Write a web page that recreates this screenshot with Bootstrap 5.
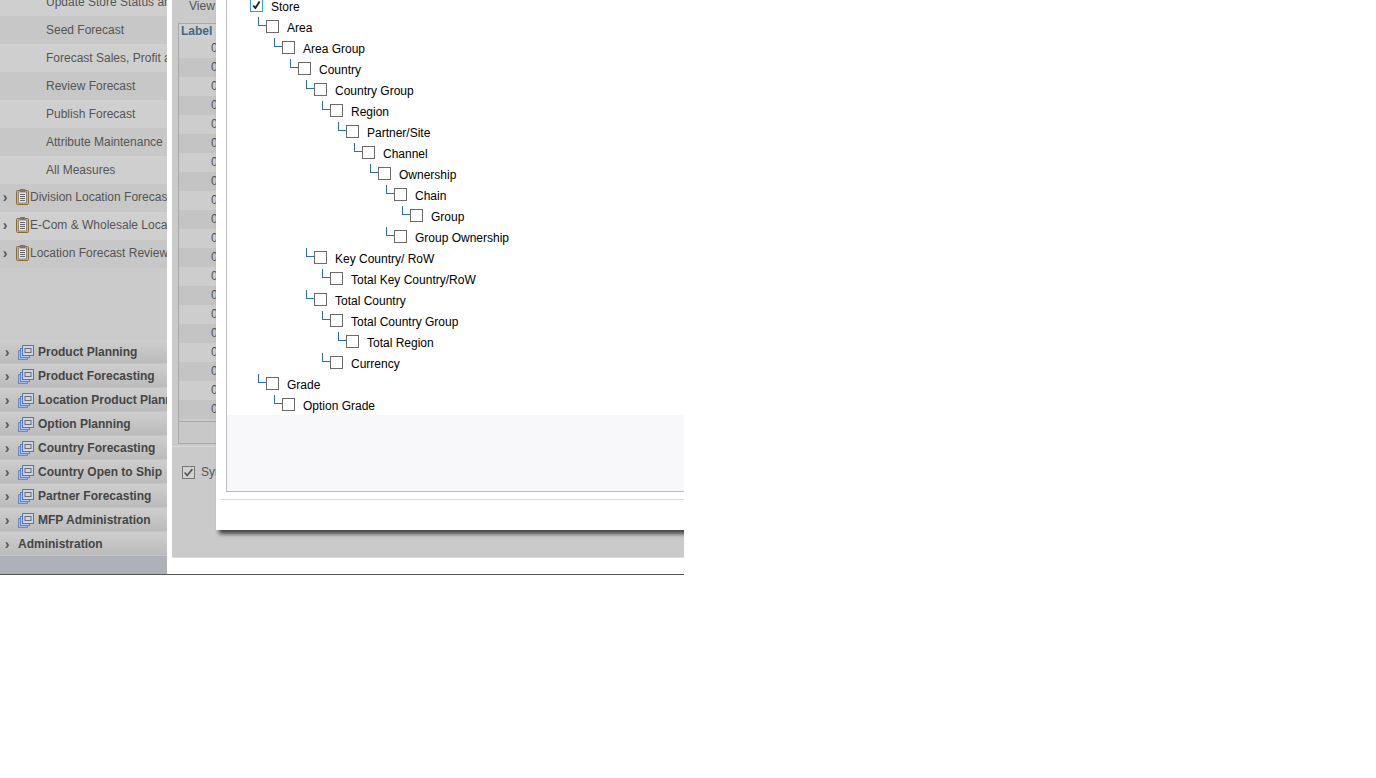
<!DOCTYPE html>
<html lang="en">
<head>
<meta charset="UTF-8">
<title>Store hierarchy</title>
<link href="https://cdn.jsdelivr.net/npm/bootstrap@5.3.3/dist/css/bootstrap.min.css" rel="stylesheet">
<style>
    body { margin: 0; background: #fff; font-family: "Liberation Sans", Arial, sans-serif; font-size: 12px; color: #000; }
    .stage { width: 684px; height: 575px; overflow: hidden; position: relative; border-bottom: 1px solid #555; }
    .side { width: 167px; height: 575px; background: #aeb1ba; overflow: hidden; position: relative; z-index: 1; }
    .side-top { height: 352px; margin-top: -12px; background: #cbcbcb; color: #555; }
    .tree-row { height: 28px; line-height: 28px; white-space: nowrap; overflow: hidden; }
    .tree-row:nth-child(odd) { background: #cfcfcf; }
    .tree-row:nth-child(even) { background: #c7c7c7; }
    .child-row { padding-left: 46px; }
    .folder-row { display: flex; align-items: center; line-height: 26px; padding-bottom: 2px; }
    .arrow { width: 14px; text-align: center; color: #555; flex: none; font-weight: bold; font-size: 14px; line-height: 1; }
    .folder-row .arrow { width: 10px; margin-right: 6px; }
    .clip-icon { flex: none; margin-right: 1px; }
    .acc-row { height: 24px; display: flex; align-items: center; font-weight: bold; color: #454545; white-space: nowrap; overflow: hidden; background: linear-gradient(#cecece, #bbbbbb); border-bottom: 1px solid #c6c6b8; }
    .acc-icon { flex: none; margin: 0 4px; }
    .main { position: absolute; left: 172px; top: 0; right: 0; height: 558px; background: #cacaca; border-bottom: 1px solid #dcdcdc; color: #555; }
    .view-row { height: 23px; padding-left: 17px; line-height: 13px; }
    .grid-box { margin-left: 6px; width: 500px; height: 421px; border: 1px solid #a8a8a8; }
    .grid-head { height: 15px; line-height: 15px; padding-left: 2px; font-weight: bold; color: #3f6a85; background: #cfcfcf; }
    .grid-cell { height: 19px; line-height: 19px; padding-left: 32px; background: #cdcdcd; }
    .grid-cell:nth-child(even) { background: #c4c4c4; }
    .grid-foot { height: 21px; margin-top: 2px; border-top: 1px solid #a8a8a8; background: #c8c8c8; }
    .main-rule { margin-top: 2px; border-top: 1px solid #d8d8d8; }
    .sync-row { padding: 18px 0 0 10px; line-height: 14px; gap: 6px; }
    .sync-box { appearance: none; width: 13px; height: 13px; margin: 0; border: 1px solid #777; background: #d2d2d2 url("data:image/svg+xml,%3Csvg xmlns='http://www.w3.org/2000/svg' viewBox='0 0 13 13'%3E%3Cpath d='M2 6.5 5 10 11 2.5' fill='none' stroke='%23555' stroke-width='2'/%3E%3C/svg%3E") center no-repeat; }
    .dialog { position: absolute; left: 216px; top: -40px; width: 600px; height: 570px; background: #fff; box-shadow: 3px 4px 4px rgba(0, 0, 0, .65); z-index: 2; padding-left: 10px; }
    .tree-panel { height: 532px; border-left: 1px solid #bbb; border-bottom: 1px solid #bbb; background: #f8f8fa; }
    .tree-body { background: #fff; padding: 36px 0 0 23px; height: 455px; }
    .dialog-rule { margin: 7px 0 0 -5px; border-top: 1px solid #ddd; }
    .node-list, .node-list ul { list-style: none; margin: 0; padding: 0; }
    .node-list ul { padding-left: 16px; }
    .node { position: relative; display: flex; align-items: center; gap: 8px; height: 21px; white-space: nowrap; }
    .node-sub::before { content: ""; position: absolute; left: -8px; top: 0; width: 8px; height: 9px; border-left: 1px solid #2a6cc4; border-bottom: 1px solid #2a6cc4; }
    .node-box { appearance: none; width: 13px; height: 13px; margin: 3px 0 0; align-self: flex-start; flex: none; border: 1px solid #6b6b6b; background: #fff; border-radius: 0; }
    .node-box:checked { border-color: #2f9fdc; background: #fff url("data:image/svg+xml,%3Csvg xmlns='http://www.w3.org/2000/svg' viewBox='0 0 13 13'%3E%3Cpath d='M2.5 6.5 5.2 9.5 10.2 1.8' fill='none' stroke='%23222' stroke-width='2.2'/%3E%3C/svg%3E") center no-repeat; }
</style>
</head>
<body>

<svg width="0" height="0" class="position-absolute">
    <symbol id="clipIcon" viewBox="0 0 13 16">
        <rect x="0.5" y="1.5" width="12" height="14" rx="1" fill="#d8b070" stroke="#8f6a2e"/>
        <rect x="2.5" y="3" width="8" height="11" fill="#e6e6e2" stroke="#8a8a8a"/>
        <rect x="4" y="0" width="5" height="3" fill="#777"/>
        <path d="M4 5.5h5M4 7.5h5M4 9.5h5M4 11.5h5" stroke="#666"/>
    </symbol>
    <symbol id="winIcon" viewBox="0 0 16 16">
        <rect x="0.5" y="6.5" width="9" height="9" fill="#a9bbdc" stroke="#6a8cc4"/>
        <rect x="2.5" y="4.5" width="9" height="9" fill="#b9c8e2" stroke="#5f84c0"/>
        <rect x="4.5" y="1.5" width="11" height="10" fill="#c9d6ea" stroke="#4f78bc"/>
        <rect x="7" y="4.5" width="6" height="4" fill="#d6d6d6" stroke="#6d6d6d"/>
    </symbol>
</svg>

<div class="stage">
    <div class="side">
        <div class="side-top">
            <div class="tree-row child-row">Update Store Status and Attributes</div>
            <div class="tree-row child-row">Seed Forecast</div>
            <div class="tree-row child-row">Forecast Sales, Profit and Margin</div>
            <div class="tree-row child-row">Review Forecast</div>
            <div class="tree-row child-row">Publish Forecast</div>
            <div class="tree-row child-row">Attribute Maintenance</div>
            <div class="tree-row child-row">All Measures</div>
            <div class="tree-row folder-row"><span class="arrow">›</span><svg class="clip-icon" width="13" height="16"><use href="#clipIcon"/></svg>Division Location Forecast</div>
            <div class="tree-row folder-row"><span class="arrow">›</span><svg class="clip-icon" width="13" height="16"><use href="#clipIcon"/></svg>E-Com &amp; Wholesale Location</div>
            <div class="tree-row folder-row"><span class="arrow">›</span><svg class="clip-icon" width="13" height="16"><use href="#clipIcon"/></svg>Location Forecast Review</div>
        </div>
        <div class="acc-row"><span class="arrow">›</span><svg class="acc-icon" width="16" height="16"><use href="#winIcon"/></svg>Product Planning</div>
        <div class="acc-row"><span class="arrow">›</span><svg class="acc-icon" width="16" height="16"><use href="#winIcon"/></svg>Product Forecasting</div>
        <div class="acc-row"><span class="arrow">›</span><svg class="acc-icon" width="16" height="16"><use href="#winIcon"/></svg>Location Product Planning</div>
        <div class="acc-row"><span class="arrow">›</span><svg class="acc-icon" width="16" height="16"><use href="#winIcon"/></svg>Option Planning</div>
        <div class="acc-row"><span class="arrow">›</span><svg class="acc-icon" width="16" height="16"><use href="#winIcon"/></svg>Country Forecasting</div>
        <div class="acc-row"><span class="arrow">›</span><svg class="acc-icon" width="16" height="16"><use href="#winIcon"/></svg>Country Open to Ship</div>
        <div class="acc-row"><span class="arrow">›</span><svg class="acc-icon" width="16" height="16"><use href="#winIcon"/></svg>Partner Forecasting</div>
        <div class="acc-row"><span class="arrow">›</span><svg class="acc-icon" width="16" height="16"><use href="#winIcon"/></svg>MFP Administration</div>
        <div class="acc-row"><span class="arrow">›</span><span class="ms-1">Administration</span></div>
    </div>

    <div class="main">
        <div class="view-row">View</div>
        <div class="grid-box">
            <div class="grid-head">Label</div>
            <div>
                <div class="grid-cell">0.00</div><div class="grid-cell">0.00</div><div class="grid-cell">0.00</div><div class="grid-cell">0.00</div>
                <div class="grid-cell">0.00</div><div class="grid-cell">0.00</div><div class="grid-cell">0.00</div><div class="grid-cell">0.00</div>
                <div class="grid-cell">0.00</div><div class="grid-cell">0.00</div><div class="grid-cell">0.00</div><div class="grid-cell">0.00</div>
                <div class="grid-cell">0.00</div><div class="grid-cell">0.00</div><div class="grid-cell">0.00</div><div class="grid-cell">0.00</div>
                <div class="grid-cell">0.00</div><div class="grid-cell">0.00</div><div class="grid-cell">0.00</div><div class="grid-cell">0.00</div>
            </div>
            <div class="grid-foot"></div>
        </div>
        <div class="main-rule"></div>
        <div class="sync-row d-flex align-items-center"><input type="checkbox" class="sync-box" checked disabled><span>Sync</span></div>
    </div>

    <div class="dialog">
        <div class="tree-panel">
            <div class="tree-body">
                <ul class="node-list">
                    <li><div class="node"><input type="checkbox" class="node-box" checked><span>Store</span></div>
                        <ul>
                            <li><div class="node node-sub"><input type="checkbox" class="node-box"><span>Area</span></div>
                                <ul>
                                    <li><div class="node node-sub"><input type="checkbox" class="node-box"><span>Area Group</span></div>
                                        <ul>
                                            <li><div class="node node-sub"><input type="checkbox" class="node-box"><span>Country</span></div>
                                                <ul>
                                                    <li><div class="node node-sub"><input type="checkbox" class="node-box"><span>Country Group</span></div>
                                                        <ul>
                                                            <li><div class="node node-sub"><input type="checkbox" class="node-box"><span>Region</span></div>
                                                                <ul>
                                                                    <li><div class="node node-sub"><input type="checkbox" class="node-box"><span>Partner/Site</span></div>
                                                                        <ul>
                                                                            <li><div class="node node-sub"><input type="checkbox" class="node-box"><span>Channel</span></div>
                                                                                <ul>
                                                                                    <li><div class="node node-sub"><input type="checkbox" class="node-box"><span>Ownership</span></div>
                                                                                        <ul>
                                                                                            <li><div class="node node-sub"><input type="checkbox" class="node-box"><span>Chain</span></div>
                                                                                                <ul>
                                                                                                    <li><div class="node node-sub"><input type="checkbox" class="node-box"><span>Group</span></div></li>
                                                                                                </ul>
                                                                                            </li>
                                                                                            <li><div class="node node-sub"><input type="checkbox" class="node-box"><span>Group Ownership</span></div></li>
                                                                                        </ul>
                                                                                    </li>
                                                                                </ul>
                                                                            </li>
                                                                        </ul>
                                                                    </li>
                                                                </ul>
                                                            </li>
                                                        </ul>
                                                    </li>
                                                    <li><div class="node node-sub"><input type="checkbox" class="node-box"><span>Key Country/ RoW</span></div>
                                                        <ul>
                                                            <li><div class="node node-sub"><input type="checkbox" class="node-box"><span>Total Key Country/RoW</span></div></li>
                                                        </ul>
                                                    </li>
                                                    <li><div class="node node-sub"><input type="checkbox" class="node-box"><span>Total Country</span></div>
                                                        <ul>
                                                            <li><div class="node node-sub"><input type="checkbox" class="node-box"><span>Total Country Group</span></div>
                                                                <ul>
                                                                    <li><div class="node node-sub"><input type="checkbox" class="node-box"><span>Total Region</span></div></li>
                                                                </ul>
                                                            </li>
                                                            <li><div class="node node-sub"><input type="checkbox" class="node-box"><span>Currency</span></div></li>
                                                        </ul>
                                                    </li>
                                                </ul>
                                            </li>
                                        </ul>
                                    </li>
                                </ul>
                            </li>
                            <li><div class="node node-sub"><input type="checkbox" class="node-box"><span>Grade</span></div>
                                <ul>
                                    <li><div class="node node-sub"><input type="checkbox" class="node-box"><span>Option Grade</span></div></li>
                                </ul>
                            </li>
                        </ul>
                    </li>
                </ul>
            </div>
        </div>
        <div class="dialog-rule"></div>
    </div>
</div>

<script src="https://cdn.jsdelivr.net/npm/bootstrap@5.3.3/dist/js/bootstrap.bundle.min.js"></script>
</body>
</html>
